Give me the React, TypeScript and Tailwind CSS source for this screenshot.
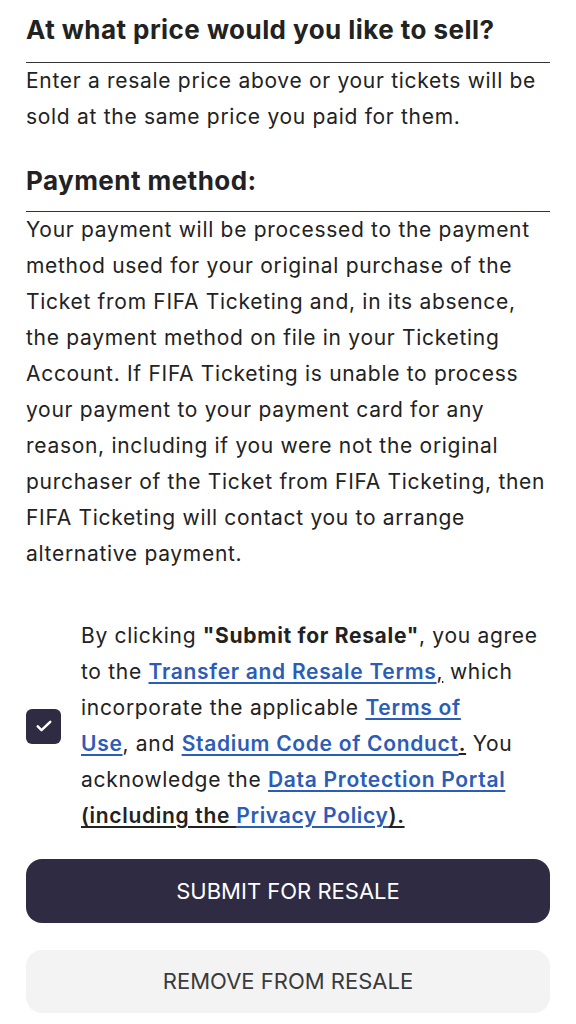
import React from 'react';

const Link: React.FC<{ children: React.ReactNode }> = ({ children }) => (
  <a href="#" className="font-semibold text-[#2b5cb8] underline underline-offset-[3px] decoration-[1.5px]">
    {children}
  </a>
);

const App: React.FC = () => {
  return (
    <div className="min-h-[1024px] bg-white px-[26px] pt-3 text-[#222222] font-['Inter',sans-serif]">
      <h2 className="border-b-[1.5px] border-[#333333] pb-[14px] text-[26px] leading-[36px] font-bold tracking-[0.45px]">
        At what price would you like to sell?
      </h2>
      <p className="text-[21px] leading-[36px] tracking-[0.7px]">
        Enter a resale price above or your tickets will be sold at the same price you paid for them.
      </p>

      <h2 className="mt-[28px] border-b-[1.5px] border-[#333333] pb-3 text-[26px] leading-[36px] font-bold tracking-[0.45px]">
        Payment method:
      </h2>
      <p className="text-[21px] leading-[36px] tracking-[0.7px]">
        Your payment will be processed to the payment method used for your original purchase of the
        Ticket from FIFA Ticketing and, in its absence, the payment method on file in your Ticketing
        Account. If FIFA Ticketing is unable to process your payment to your payment card for any
        reason, including if you were not the original purchaser of the Ticket from FIFA Ticketing,
        then FIFA Ticketing will contact you to arrange alternative payment.
      </p>

      <div className="mt-[46px] flex items-center gap-[20px]">
        <div className="flex h-[35px] w-[35px] shrink-0 items-center justify-center rounded-[6px] bg-[#2e2b42]">
          <svg width="20" height="20" viewBox="0 0 24 24" fill="none" stroke="white" strokeWidth="3" strokeLinecap="round" strokeLinejoin="round">
            <path d="M4.5 12.5l4.5 4.5L19.5 7" />
          </svg>
        </div>
        <p className="text-[21px] leading-[36px] tracking-[0.7px]">
          By clicking <span className="font-bold">"Submit for Resale"</span>, you agree to the{' '}
          <Link>Transfer and Resale Terms</Link>
          <span className="underline">,</span> which incorporate the applicable{' '}
          <Link>
            Terms of
            <br />
            Use
          </Link>
          , and <Link>Stadium Code of Conduct</Link>
          <span className="font-semibold underline">.</span> You acknowledge the{' '}
          <Link>Data Protection Portal</Link>{' '}
          <span className="font-semibold underline underline-offset-[3px]">
            (including the <Link>Privacy Policy</Link>).
          </span>
        </p>
      </div>

      <div className="mt-[25px] flex flex-col gap-[27px] pb-[11px]">
        <button className="h-[64px] w-full rounded-[16px] bg-[#2e2b42] text-[22px] text-white">
          SUBMIT FOR RESALE
        </button>
        <button className="h-[63px] w-full rounded-[16px] bg-[#f3f3f3] text-[22px] text-[#3a3a3a]">
          REMOVE FROM RESALE
        </button>
      </div>
    </div>
  );
};

export default App;
